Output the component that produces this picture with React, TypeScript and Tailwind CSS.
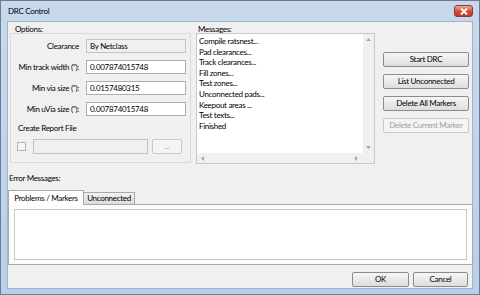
import React from "react";

// DRC Control dialog, Windows 7 style

const inputCls =
  "h-[14px] w-[100px] border border-[#abadb3] bg-white px-[3px] leading-[12px] text-black flex items-center whitespace-nowrap";

function Btn({ label, disabled }: { label: string; disabled?: boolean }) {
  return (
    <div
      className={
        "h-[15px] w-[86px] rounded-[2px] border flex items-center justify-center whitespace-nowrap " +
        (disabled
          ? "border-[#c8c8c8] bg-[#f4f4f4] text-[#a0a0a0]"
          : "border-[#8c8c8c] bg-gradient-to-b from-[#f6f6f6] to-[#dddddd] text-black")
      }
    >
      {label}
    </div>
  );
}

function Row({ label, value, disabled }: { label: string; value: string; disabled?: boolean }) {
  return (
    <div className="flex items-center h-[14px]">
      <div className="w-[68px] text-right whitespace-nowrap">{label}</div>
      <div
        className={
          inputCls +
          " ml-[7px] " +
          (disabled ? "!bg-[#f0f0f0] !border-[#c3c3c3] text-[#8a8a8a]" : "")
        }
      >
        {value}
      </div>
    </div>
  );
}

const messages = [
  "Compile ratsnest...",
  "Pad clearances...",
  "Track clearances...",
  "Fill zones...",
  "Test zones...",
  "Unconnected pads...",
  "Keepout areas ...",
  "Test texts...",
  "Finished",
];

export default function App() {
  return (
    <div className="w-[480px] h-[295px] overflow-hidden border border-[#6b7d92] bg-gradient-to-b from-[#c9d9ec] to-[#b9cfe8] font-['Lato',sans-serif] text-[8px] tracking-[-0.3px] leading-[11px] text-black">
      {/* title bar */}
      <div className="h-[20px] flex items-center pl-[7px] pr-[6px]">
        <div>DRC Control</div>
        <div className="ml-auto h-[12px] w-[19px] rounded-[3px] border border-[#8c3a32] bg-gradient-to-b from-[#e9a99c] via-[#d2533f] to-[#c0392b] flex items-center justify-center">
          <svg width="8" height="7" viewBox="0 0 8 7">
            <path d="M1 0.5 L7 6.5 M7 0.5 L1 6.5" stroke="white" strokeWidth="1.8" />
          </svg>
        </div>
      </div>

      {/* client area */}
      <div className="ml-[6px] w-[466px] h-[268px] border border-[#9fb3c9] bg-[#f0f0f0]">
        <div className="flex items-start pt-[1px]">
          {/* options */}
          <div className="ml-[2px] w-[181px]">
            <div className="pl-[5px] pt-[1px] h-[10px]">Options:</div>
            <div className="h-[130px] border border-[#dadada] pt-[5px]">
              <div className="flex flex-col gap-[7px]">
                <Row label="Clearance" value="By Netclass" disabled />
                <Row label={'Min track width ("):'} value="0.007874015748" />
                <Row label={'Min via size ("):'} value="0.0157480315" />
                <Row label={'Min uVia size ("):'} value="0.007874015748" />
              </div>
              <div className="mt-[7px] pl-[7px]">Create Report File</div>
              <div className="mt-[5px] flex items-center pl-[6px]">
                <div className="h-[9px] w-[9px] border border-[#b5b5b5] bg-[#f4f4f4]" />
                <div className="ml-[7px] h-[15px] w-[115px] border border-[#c3c3c3] bg-[#f0f0f0]" />
                <div className="ml-[4px] h-[15px] w-[30px] rounded-[2px] border border-[#c8c8c8] bg-[#f4f4f4] flex items-center justify-center text-[#a0a0a0]">
                  ...
                </div>
              </div>
            </div>
          </div>

          {/* messages */}
          <div className="ml-[5px] w-[179px]">
            <div className="pl-[2px] pt-[1px] h-[10px]">Messages:</div>
            <div className="h-[131px] border border-[#c9c9c9] bg-[#f0f0f0] flex flex-col">
              <div className="flex flex-1 min-h-0">
                <div className="flex-1 bg-white pl-[2px] pt-[2px] leading-[10.6px]">
                  {messages.map((m) => (
                    <div key={m}>{m}</div>
                  ))}
                </div>
                <div className="w-[11px] flex flex-col items-center justify-between py-[4px]">
                  <svg width="5" height="3" viewBox="0 0 5 3">
                    <path d="M0 3 L2.5 0 L5 3 Z" fill="#a8a8a8" />
                  </svg>
                  <svg width="5" height="3" viewBox="0 0 5 3">
                    <path d="M0 0 L2.5 3 L5 0 Z" fill="#a8a8a8" />
                  </svg>
                </div>
              </div>
              <div className="h-[10px] flex items-center justify-between pl-[4px] pr-[16px]">
                <svg width="3" height="5" viewBox="0 0 3 5">
                  <path d="M3 0 L0 2.5 L3 5 Z" fill="#a8a8a8" />
                </svg>
                <svg width="3" height="5" viewBox="0 0 3 5">
                  <path d="M0 0 L3 2.5 L0 5 Z" fill="#a8a8a8" />
                </svg>
              </div>
            </div>
          </div>

          {/* buttons */}
          <div className="ml-[8px] mt-[29px] flex flex-col gap-[7px]">
            <Btn label="Start DRC" />
            <Btn label="List Unconnected" />
            <Btn label="Delete All Markers" />
            <Btn label="Delete Current Marker" disabled />
          </div>
        </div>

        {/* error messages */}
        <div className="mt-[9px] pl-[1px]">Error Messages:</div>
        <div className="mt-[5px] flex items-end h-[15px]">
          <div className="h-[15px] w-[76px] border border-b-0 border-[#a9a9a9] bg-white flex items-center justify-center whitespace-nowrap relative z-10 -mb-px">
            Problems / Markers
          </div>
          <div className="h-[12px] w-[51px] border border-b-0 border-l-0 border-[#a9a9a9] bg-gradient-to-b from-[#f2f2f2] to-[#dcdcdc] flex items-center justify-center whitespace-nowrap">
            Unconnected
          </div>
        </div>
        <div className="w-[465px] h-[61px] border border-[#a9a9a9] bg-[#fcfcfc] p-[4px] pl-[5px]">
          <div className="h-[51px] w-[453px] border border-[#c7c7c7] bg-white" />
        </div>

        {/* OK / Cancel */}
        <div className="mt-[7px] flex justify-end gap-[4px] pr-[4px]">
          <div className="h-[15px] w-[57px] rounded-[2px] border border-[#8c8c8c] bg-gradient-to-b from-[#f6f6f6] to-[#dddddd] flex items-center justify-center">
            OK
          </div>
          <div className="h-[15px] w-[55px] rounded-[2px] border border-[#8c8c8c] bg-gradient-to-b from-[#f6f6f6] to-[#dddddd] flex items-center justify-center">
            Cancel
          </div>
        </div>
      </div>
    </div>
  );
}
